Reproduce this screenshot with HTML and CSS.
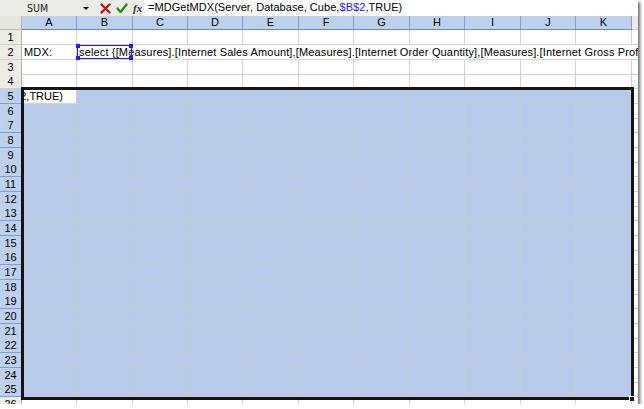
FILE: index.html
```html
<!DOCTYPE html>
<html lang="en">
<head>
    <meta charset="UTF-8">
    <title>MDGetMDX</title>
    <link rel="stylesheet" href="styles.css">
</head>
<body>
    <div class="shot">
        <!-- Formula bar -->
        <div class="fbar">
            <div class="namebox">
                <span>SUM</span>
                <span class="arrow"></span>
            </div>
            <div class="fbtns">
                <svg class="ico" width="11" height="11" viewBox="0 0 11 11">
                    <path d="M1.5 1.5 L9.5 9.5 M9.5 1.5 L1.5 9.5" stroke="#c4161c" stroke-width="2.4" stroke-linecap="round"/>
                </svg>
                <svg class="ico" width="12" height="11" viewBox="0 0 12 11">
                    <path d="M1.5 5.5 L4.5 9 L10.5 1.5" stroke="#1e8c23" stroke-width="2.3" fill="none" stroke-linecap="round" stroke-linejoin="round"/>
                </svg>
                <span class="fx">fx</span>
            </div>
            <div class="formula">=MDGetMDX(Server, Database, Cube,<span class="ref">$B$2</span>,TRUE)</div>
        </div>

        <!-- Grid -->
        <div class="sheet">
            <div class="row head-row">
                <div class="corner"></div>
                <div class="colhead">A</div>
                <div class="colhead">B</div>
                <div class="colhead">C</div>
                <div class="colhead">D</div>
                <div class="colhead">E</div>
                <div class="colhead">F</div>
                <div class="colhead">G</div>
                <div class="colhead">H</div>
                <div class="colhead">I</div>
                <div class="colhead">J</div>
                <div class="colhead">K</div>
                <div class="colhead rest"></div>
            </div>
            <div id="rows"></div>
        </div>

        <!-- Overlays -->
        <div class="refbox">
            <span class="dot tl"></span><span class="dot tr"></span>
            <span class="dot bl"></span><span class="dot br"></span>
        </div>
        <div class="selbox"></div>
        <div class="fill-handle"></div>
    </div>

    <script>
        const rowsEl = document.getElementById('rows');
        const mdx = 'select {[Measures].[Internet Sales Amount],[Measures].[Internet Order Quantity],[Measures].[Internet Gross Profit]} on columns from [Adventure Works]';

        for (let r = 1; r <= 26; r++) {
            const row = document.createElement('div');
            row.className = 'row ' + (r % 3 === 0 ? 'h14' : 'h15');
            const inSel = r >= 5 && r <= 25;

            const head = document.createElement('div');
            head.className = 'rowhead' + (inSel ? ' hi' : '');
            head.textContent = r;
            row.appendChild(head);

            for (let c = 0; c < 11; c++) {
                const cell = document.createElement('div');
                cell.className = 'cell';
                if (inSel && !(r === 5 && c === 0)) cell.classList.add('sel');

                if (r === 2 && c === 0) cell.textContent = 'MDX:';
                if (r === 2 && c === 1) {
                    cell.classList.add('spill');
                    cell.textContent = mdx;
                }
                if (r === 2 && c > 1) cell.classList.add('plain');

                if (r === 5 && c === 0) {
                    cell.classList.add('active');
                    cell.innerHTML = '<span class="edit">=MDGetMDX(Server, Database, Cube,$B$2,TRUE)</span>';
                }
                row.appendChild(cell);
            }

            const rest = document.createElement('div');
            rest.className = 'cell plain';
            row.appendChild(rest);
            rowsEl.appendChild(row);
        }
    </script>
</body>
</html>
```

FILE: styles.css
```css
* {
    margin: 0;
    padding: 0;
    box-sizing: border-box;
}

body {
    background: #fff;
    font-family: "Liberation Sans", Arial, sans-serif;
    color: #000;
}

.shot {
    position: relative;
    width: 638px;
    height: 404px;
    overflow: hidden;
    background: #fff;
    box-shadow: 2px 2px 3px rgba(0, 0, 0, 0.6);
}

/* Formula bar */
.fbar {
    display: flex;
    height: 16px;
    background: #ecebe5;
}

.namebox {
    width: 95px;
    display: flex;
    align-items: center;
    padding-left: 27px;
    font-family: "Liberation Sans Narrow", "DejaVu Sans Condensed", "Liberation Sans", sans-serif;
    font-size: 10.5px;
    color: #222;
}

.namebox .arrow {
    margin-left: auto;
    margin-right: 6px;
    width: 0;
    height: 0;
    border-left: 3px solid transparent;
    border-right: 3px solid transparent;
    border-top: 3px solid #000;
}

.fbtns {
    width: 49px;
    display: flex;
    align-items: center;
    padding-left: 5px;
    gap: 5px;
}

.fx {
    font-family: "Liberation Serif", serif;
    font-style: italic;
    font-weight: bold;
    font-size: 11px;
    color: #333;
}

.formula {
    flex: 1;
    background: #fff;
    padding-left: 4px;
    font-size: 11px;
    letter-spacing: 0.05px;
    line-height: 15px;
    white-space: nowrap;
}

.formula .ref {
    color: #1a1aff;
}

/* Sheet grid */
.row {
    display: grid;
    grid-template-columns: 22px 55px 56px 55px 55px 56px 55px 56px 55px 56px 55px 56px 1fr;
}

.head-row {
    height: 14px;
}

.h15 {
    height: 15px;
}

.h14 {
    height: 14px;
}

.corner {
    background: #e6e5de;
    border-right: 1px solid #b9b8ad;
    border-bottom: 1px solid #b9b8ad;
}

.colhead {
    background: #bdd0ee;
    border-right: 1px solid #7f9dd6;
    border-bottom: 1px solid #6486c8;
    text-align: center;
    font-size: 11px;
    line-height: 13px;
}

.colhead.rest {
    background: #ecebe5;
    border-right: none;
    border-bottom-color: #c9c7bb;
}

.rowhead {
    background: #ecebe5;
    border-right: 1px solid #b3b2a6;
    border-bottom: 1px solid #d2d0c5;
    text-align: center;
    font-size: 11px;
    line-height: 14px;
}

.rowhead.hi {
    background: #bdd0ee;
    border-right-color: #3b62b5;
    border-bottom-color: #7f9dd6;
}

.cell {
    border-right: 1px solid #d2d2d2;
    border-bottom: 1px solid #d2d2d2;
    padding-left: 2px;
    font-size: 11px;
    letter-spacing: 0.15px;
    line-height: 14px;
    white-space: nowrap;
}

.cell.sel {
    background: #b7cae9;
    border-color: #c6cad2;
}

.cell.plain {
    border-right: none;
}

.cell.spill {
    border-right: none;
    overflow: visible;
}

.cell.active {
    display: flex;
    justify-content: flex-end;
    overflow: hidden;
    padding-right: 13px;
    letter-spacing: 0;
    background: #fff;
}

/* Overlays */
.refbox {
    position: absolute;
    left: 77px;
    top: 45px;
    width: 55px;
    height: 14px;
    border: 1px solid #1a1aff;
}

.dot {
    position: absolute;
    width: 4px;
    height: 4px;
    background: #1a1aff;
}

.dot.tl { left: -2px; top: -2px; }
.dot.tr { right: -2px; top: -2px; }
.dot.bl { left: -2px; bottom: -2px; }
.dot.br { right: -2px; bottom: -2px; }

.selbox {
    position: absolute;
    left: 21px;
    top: 87px;
    width: 613px;
    height: 313px;
    border: 3px solid #141414;
}

.fill-handle {
    position: absolute;
    left: 629px;
    top: 396px;
    width: 6px;
    height: 6px;
    background: #141414;
    border: 1px solid #fff;
}
```
